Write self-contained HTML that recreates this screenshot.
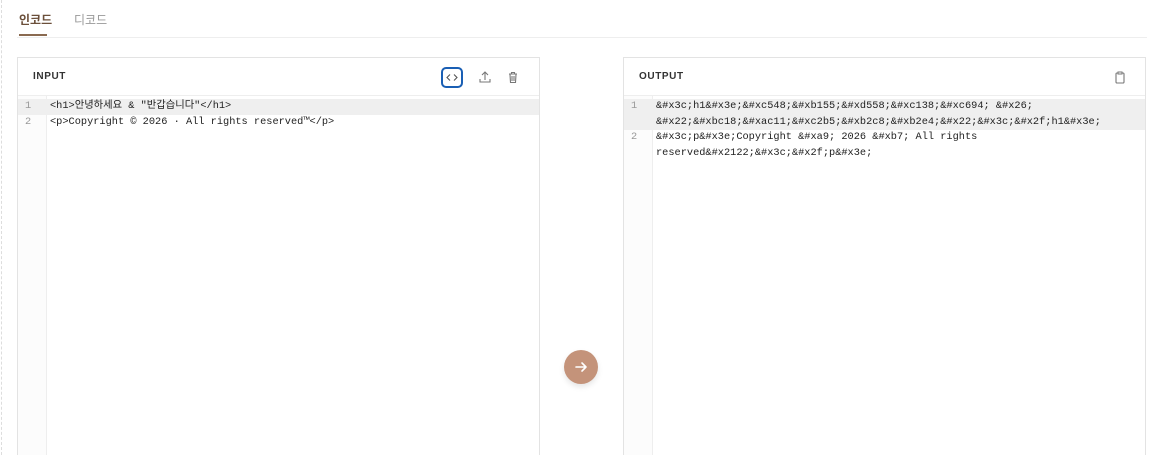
<!DOCTYPE html>
<html><head><meta charset="utf-8"><style>
*{box-sizing:border-box;margin:0;padding:0}
html,body{width:1161px;height:455px;overflow:hidden}
body{background:#fff;font-family:"Liberation Sans","Noto Sans CJK KR",sans-serif;position:relative}
.dash{position:absolute;left:1px;top:0;bottom:0;border-left:1px dashed #ddd}
.tabs{position:absolute;left:17px;top:0;width:1130px;height:38px;border-bottom:1px solid #eee}
.tab{position:absolute;top:11px;font-size:11px;font-weight:bold}
.t1{left:2px;color:#6b4f3a;font-size:12px}
.t2{left:57px;color:#999;font-weight:normal;font-size:12px}
.ul{position:absolute;left:2px;top:34px;width:28px;height:2px;background:#8a6a50}
.panel{position:absolute;top:57px;width:523px;height:420px;border:1px solid #e3e3e3;background:#fff}
.hd{height:38px;border-bottom:1px solid #eee;position:relative}
.hd span{position:absolute;left:15px;top:13px;font-size:10px;font-weight:bold;letter-spacing:.6px;color:#333}
.gut{position:absolute;left:0;top:38px;width:29px;bottom:0;border-right:1px solid #eee;background:#fcfcfc}
.code{position:absolute;left:0;right:0;top:41px;font-family:"Liberation Mono","Noto Sans CJK KR",monospace;font-size:10.3px;color:#222}
.ln{position:relative;line-height:15.5px;padding-left:32px}
.ln.hl{background:#efefef}
.n{position:absolute;left:7px;color:#999;width:20px}
.ic{position:absolute;top:9px;width:22px;height:21px}
.btn{position:absolute;left:564px;top:350px;width:34px;height:34px;border-radius:50%;background:#c4937a;box-shadow:0 3px 6px rgba(0,0,0,.1)}
</style></head><body>
<div class="dash"></div>
<div class="tabs"><div class="tab t1">인코드</div><div class="tab t2">디코드</div><div class="ul"></div></div>

<div class="panel" style="left:17px">
<div class="hd"><span>INPUT</span>
<svg class="ic" style="left:423px" viewBox="0 0 22 21"><rect x="1" y="1" width="20" height="19" rx="4" fill="none" stroke="#1a5fb4" stroke-width="2"/><path d="M9 7.5L6 10.5 9 13.5M13 7.5L16 10.5 13 13.5" fill="none" stroke="#555" stroke-width="1.1"/></svg>
<svg class="ic" style="left:456px" viewBox="0 0 22 21"><path d="M11 5v8M8 8l3-3 3 3M6 12v3h10v-3" fill="none" stroke="#777" stroke-width="1.1"/></svg>
<svg class="ic" style="left:484px" viewBox="0 0 22 21"><path d="M7 7h8M9.5 7V5.5h3V7M8 7.5l.5 8h5l.5-8M10 9v5M12 9v5" fill="none" stroke="#777" stroke-width="1.1"/></svg>
</div>
<div class="gut"></div>
<div class="code">
<div class="ln hl"><span class="n">1</span>&lt;h1&gt;안녕하세요 &amp; "반갑습니다"&lt;/h1&gt;</div>
<div class="ln"><span class="n">2</span>&lt;p&gt;Copyright © 2026 · All rights reserved™&lt;/p&gt;</div>
</div>
</div>

<div class="btn"><svg width="34" height="34" viewBox="0 0 34 34"><path d="M12 17h10M18 13l4 4-4 4" fill="none" stroke="#fff" stroke-width="1.6" stroke-linecap="round" stroke-linejoin="round"/></svg></div>

<div class="panel" style="left:623px">
<div class="hd"><span>OUTPUT</span>
<svg class="ic" style="left:485px" viewBox="0 0 22 21"><rect x="7" y="6" width="8" height="10" rx="1" fill="none" stroke="#777" stroke-width="1.1"/><rect x="9" y="5" width="4" height="2" fill="#fff" stroke="#777" stroke-width="1"/></svg>
</div>
<div class="gut"></div>
<div class="code">
<div class="ln hl"><span class="n">1</span>&amp;#x3c;h1&amp;#x3e;&amp;#xc548;&amp;#xb155;&amp;#xd558;&amp;#xc138;&amp;#xc694; &amp;#x26;<br>&amp;#x22;&amp;#xbc18;&amp;#xac11;&amp;#xc2b5;&amp;#xb2c8;&amp;#xb2e4;&amp;#x22;&amp;#x3c;&amp;#x2f;h1&amp;#x3e;</div>
<div class="ln"><span class="n">2</span>&amp;#x3c;p&amp;#x3e;Copyright &amp;#xa9; 2026 &amp;#xb7; All rights<br>reserved&amp;#x2122;&amp;#x3c;&amp;#x2f;p&amp;#x3e;</div>
</div>
</div>
</body></html>
